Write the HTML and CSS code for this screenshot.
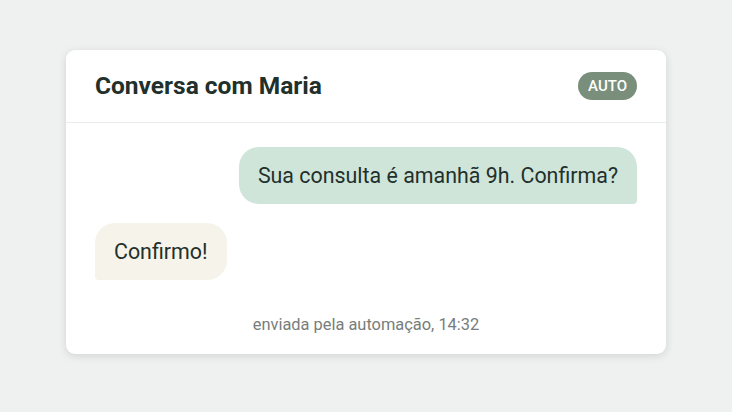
FILE: index.html
```html
<!DOCTYPE html>
<html lang="pt">
<head>
    <meta charset="UTF-8">
    <meta name="viewport" content="width=device-width, initial-scale=1.0">
    <title>Conversa com Maria</title>
    <link rel="stylesheet" href="styles.css">
</head>
<body>
    <div class="card">
        <div class="card-header">
            <h1>Conversa com Maria</h1>
            <span class="badge">AUTO</span>
        </div>
        <div class="messages">
            <div class="bubble sent">Sua consulta é amanhã 9h. Confirma?</div>
            <div class="bubble received">Confirmo!</div>
            <p class="meta">enviada pela automação, 14:32</p>
        </div>
    </div>
</body>
</html>
```

FILE: styles.css
```css
body {
    font-family: Roboto, "Noto Sans", Arial, sans-serif;
    margin: 0;
    padding: 0 0 8px;
    box-sizing: border-box;
    background: #eef1ef;
    color: #1f2a26;
    min-height: 100vh;
    display: flex;
    align-items: center;
    justify-content: center;
}
.card {
    width: 600px;
    background: #fff;
    border-radius: 9px;
    box-shadow: 0 2px 8px rgba(0,0,0,0.12);
    overflow: hidden;
}
.card-header {
    display: flex;
    align-items: center;
    justify-content: space-between;
    padding: 22px 29px 22px 29px;
    border-bottom: 1px solid #ebedec;
}
.card-header h1 {
    margin: 0;
    font-size: 24.5px;
    line-height: 28px;
    font-weight: 700;
    color: #22302b;
}
.badge {
    background: #7a8f7b;
    color: #fff;
    font-size: 15px;
    font-weight: 500;
    line-height: 28px;
    padding: 0 10px;
    border-radius: 14px;
}
.messages {
    display: flex;
    flex-direction: column;
    gap: 19px;
    padding: 24px 29px 19px 29px;
}
.bubble {
    font-size: 21.4px;
    line-height: 25px;
    padding: 16px 19px 16px 19px;
    color: #22302b;
}
.sent {
    align-self: flex-end;
    background: #cfe5da;
    border-radius: 20px 20px 4px 20px;
}
.received {
    align-self: flex-start;
    background: #f6f3ea;
    border-radius: 20px 20px 20px 4px;
}
.meta {
    margin: 16px 0 0;
    text-align: center;
    font-size: 16.4px;
    line-height: 20px;
    color: #787d7b;
}
```
